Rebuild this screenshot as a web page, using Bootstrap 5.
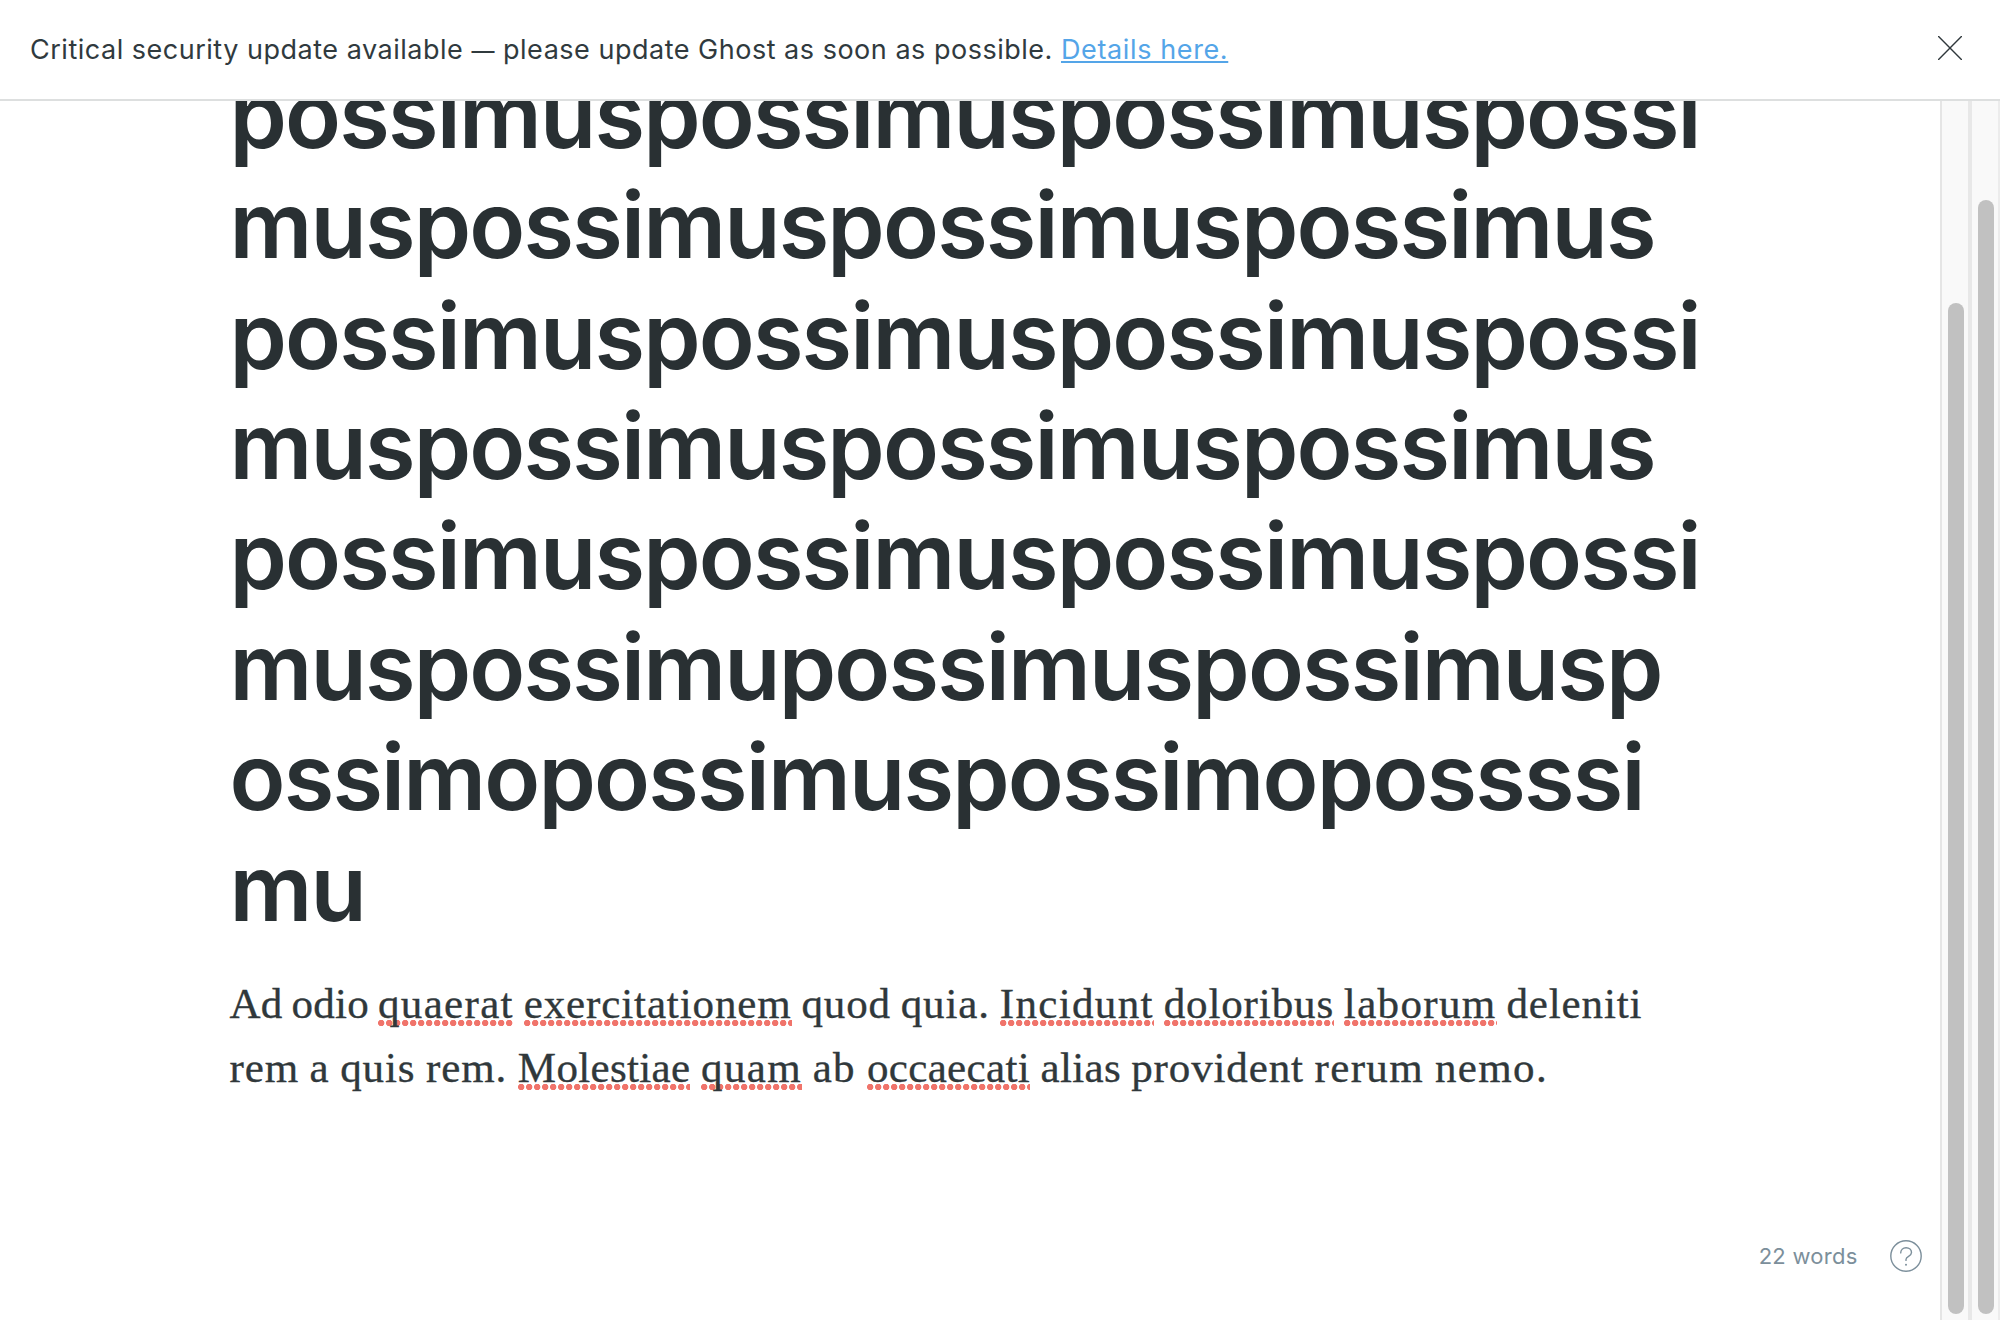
<!DOCTYPE html>
<html lang="en">
<head>
<meta charset="utf-8">
<meta name="viewport" content="width=device-width, initial-scale=1">
<title>Editor - Ghost</title>
<link href="https://cdn.jsdelivr.net/npm/bootstrap@5.3.0/dist/css/bootstrap.min.css" rel="stylesheet">
<style>
body{font-family:Inter,"Liberation Sans",sans-serif;color:#2a3135;background:#fff}
.notice{height:101px;border-bottom:2px solid #dddfdf;padding:0 38px 0 30px;background:#fff}
.notice-text{font-size:27px;line-height:40px;letter-spacing:.51px;color:#303a3e;white-space:nowrap;padding-top:1px}
.notice-dash{font-size:23px}
.notice-text a{color:#54a5e8;letter-spacing:.62px;text-decoration-thickness:2px;text-underline-offset:2px;text-decoration-skip-ink:none}
.notice-close{width:24px;height:24px;padding:0;border:0;background:none;line-height:0;margin-bottom:3px}
.work{min-height:0}
.editor{min-width:0;padding-left:229.5px}
.post-title{font-size:92px;font-weight:600;line-height:110.4px;letter-spacing:-1.83px;margin:-41.2px 0 28.5px;color:#293033;white-space:nowrap}
.post-body{font-family:"Liberation Serif",Georgia,serif;font-size:43px;line-height:64px;letter-spacing:.88px;word-spacing:-1.8px;color:#30383b;white-space:nowrap;-webkit-text-stroke:.35px #30383b}
.line-loose{word-spacing:-1px}
.ls-wide{letter-spacing:1.34px}
.ls-tight{letter-spacing:.34px}
.ls-none{letter-spacing:.2px}
.typo{background:radial-gradient(circle at 3.2px 50%,#f0746b 2.9px,transparent 3.5px) left bottom/8px 8px repeat-x}
.status{height:32px;margin:0 18px 48px 0;color:#7c8f9b}
.word-count{font-size:22px;line-height:32px;letter-spacing:.25px;margin-right:32.5px}
.track{background:#f9f9f9;padding-left:6px}
.track-inner{border-left:2px solid #e5e5e5;border-right:4px solid #e8e8e8;width:32px}
.track-outer{border-right:2px solid #ececec;width:28px}
.thumb{background:#c1c1c1;border-radius:8px;width:16px;margin-bottom:6px}
.thumb-inner{margin-top:202px}
.thumb-outer{margin-top:99px}
</style>
<script src="https://cdn.jsdelivr.net/npm/bootstrap@5.3.0/dist/js/bootstrap.bundle.min.js"></script>
</head>
<body class="vh-100 d-flex flex-column overflow-hidden">
<header class="notice d-flex align-items-center justify-content-between flex-shrink-0">
  <div class="notice-text">Critical security update available <span class="notice-dash">—</span> please update Ghost as soon as possible. <a href="#">Details here.</a></div>
  <button class="notice-close" type="button" aria-label="Close">
    <svg width="24" height="24" viewBox="0 0 24 24" fill="none" stroke="#30383c" stroke-width="1.4" stroke-linecap="round"><path d="M.6.6l22.8 22.8M23.4.6L.6 23.4"/></svg>
  </button>
</header>
<div class="work d-flex flex-grow-1">
  <main class="editor d-flex flex-column flex-grow-1 overflow-hidden">
    <h1 class="post-title">possimuspossimuspossimuspossi<br>muspossimuspossimuspossimus<br>possimuspossimuspossimuspossi<br>muspossimuspossimuspossimus<br>possimuspossimuspossimuspossi<br>muspossimupossimuspossimusp<br>ossimopossimuspossimopossssi<br>mu</h1>
    <p class="post-body mb-0"><span class="ls-none">Ad odio </span><span class="typo ls-wide">quaerat</span> <span class="typo">exercitationem</span> quod quia. <span class="typo ls-wide">Incidunt</span> <span class="typo">doloribus</span> <span class="typo ls-wide">laborum</span> deleniti<br><span class="line-loose">rem a quis rem. <span class="typo ls-tight">Molestiae</span> <span class="typo ls-wide">quam</span> <span class="ls-wide">ab </span><span class="typo ls-tight">occaecati</span> <span class="ls-tight">alias </span>provident <span class="ls-wide">rerum nemo.</span></span></p>
    <div class="status d-flex justify-content-end align-items-center mt-auto">
      <span class="word-count">22 words</span>
      <svg width="32" height="32" viewBox="0 0 32 32" fill="none" stroke="#7c8f9b" stroke-width="1.4" stroke-linecap="round" stroke-linejoin="round"><circle cx="16" cy="16" r="15.2"/><path d="M10.7 12.9c0-3 2.3-5.2 5.4-5.2 3.2 0 5.4 2 5.4 4.8 0 4-5.5 3.6-5.5 7v.9"/><circle cx="16" cy="24.8" r="1" fill="#7c8f9b" stroke="none"/></svg>
    </div>
  </main>
  <div class="track track-inner d-flex flex-shrink-0"><div class="thumb thumb-inner"></div></div>
  <div class="track track-outer d-flex flex-shrink-0"><div class="thumb thumb-outer"></div></div>
</div>
</body>
</html>
